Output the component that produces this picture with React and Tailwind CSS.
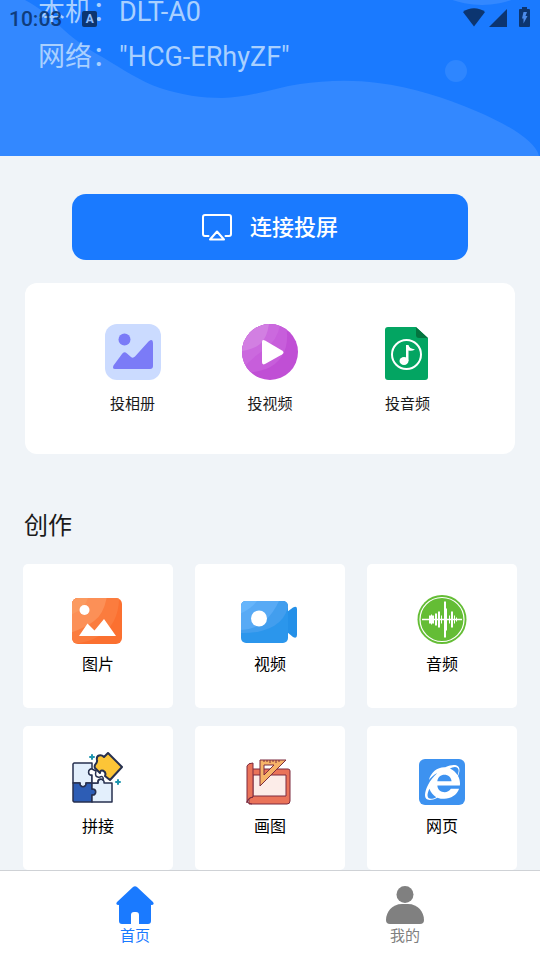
import { useState } from 'react'
import { FaInternetExplorer } from 'react-icons/fa'

function HeroBackground() {
  return (
    <svg className="absolute inset-0 h-full w-full" viewBox="0 0 540 156" preserveAspectRatio="none" aria-hidden="true">
      <rect width="540" height="156" fill="#1a7aff" />
      <path
        d="M0 0H25C40 8 50 17 64 30C76 41 88 49 104 58C122 69 140 81 160 88C182 95 202 98 222 98C248 98 274 88 300 84C322 81 350 79 378 83C412 87 446 98 476 111C505 123 536 141 539 156H0Z"
        fill="#3388ff"
      />
      <circle cx="482" cy="-85" r="90" fill="#3388ff" />
      <circle cx="456" cy="71" r="11" fill="#2e86ff" />
    </svg>
  )
}

function StatusBar() {
  return (
    <div className="absolute inset-x-0 top-0 flex items-start justify-between pt-[7px] pl-[9px] pr-[10px] text-[#0c3570]">
      <div className="flex items-center gap-5">
        <span className="text-[21px] leading-6 font-medium opacity-90">10:03</span>
        <span className="flex h-4 w-[15px] items-center justify-center rounded-xs bg-[#0c3570] text-xs font-bold text-[#8fbfff]">
          A
        </span>
      </div>
      <div className="flex items-center">
        <svg className="h-5 w-[22px]" viewBox="0 0 22 20" fill="currentColor" aria-hidden="true">
          <path d="M11 19.500L0 5C6 0 16 0 22 5Z" />
        </svg>
        <svg className="ml-1 h-5 w-[18px]" viewBox="0 0 18 20" fill="currentColor" aria-hidden="true">
          <path d="M18 2V20H0Z" />
        </svg>
        <svg className="ml-3 h-5 w-[11px]" viewBox="0 0 11 20" aria-hidden="true">
          <path d="M3 0H8V2H10Q11 2 11 3V19Q11 20 10 20H1Q0 20 0 19V3Q0 2 1 2H3Z" fill="currentColor" />
          <path d="M4.500 5H8L6.500 9H8.500L4.500 16.500V11.500H3Z" fill="#4b8bea" />
        </svg>
      </div>
    </div>
  )
}

function CastIcon() {
  return (
    <svg className="h-[27px] w-[30px]" viewBox="0 0 30 27" fill="none" stroke="white" strokeWidth="2" strokeLinejoin="round" strokeLinecap="round" aria-hidden="true">
      <path d="M6.500 22H3Q1 22 1 20V3Q1 1 3 1H27Q29 1 29 3V20Q29 22 27 22H23.500" />
      <path d="M15 17.500L22 25.500H8Z" />
    </svg>
  )
}

function AlbumIcon() {
  return (
    <svg className="size-14" viewBox="0 0 56 56" aria-hidden="true">
      <rect width="56" height="56" rx="12" fill="#cbdbff" />
      <circle cx="19.500" cy="15.500" r="6" fill="#7b7bf7" />
      <path d="M10 45Q7 45 8.500 41.500L17 30Q19 27 22 29.500L26 33Q28 34.500 30 32.500L43.500 17.500Q48 14 48 19V42Q48 45 45 45Z" fill="#7b7bf7" />
    </svg>
  )
}

function PlayIcon() {
  return (
    <svg className="size-14" viewBox="0 0 56 56" aria-hidden="true">
      <defs>
        <clipPath id="play-disc">
          <circle cx="28" cy="28" r="28" />
        </clipPath>
      </defs>
      <g clipPath="url(#play-disc)">
        <rect width="56" height="56" fill="#c04fd5" />
        <path d="M0 0H44Q50 34 24 45Q10 50 0 47Z" fill="#c75edb" />
        <path d="M0 0H38Q36 16 22 26Q12 32 0 45Z" fill="#cb69de" />
        <path d="M0 0H27Q25 14 18 20Q12 25 0 27Z" fill="#d27fe2" />
      </g>
      <path d="M20 18Q20 15 23 16.500L40 26.500Q43 28.500 40 30.500L23 40Q20 41.500 20 38Z" fill="white" />
    </svg>
  )
}

function MusicFileIcon() {
  return (
    <svg className="size-14" viewBox="0 0 56 56" aria-hidden="true">
      <path d="M8 3H36L48 14V53Q48 56 45 56H8Q5 56 5 53V6Q5 3 8 3Z" fill="#03a562" />
      <path d="M36 3H48V14Z" fill="white" />
      <path d="M36 3L48 14H39Q36 14 36 11Z" fill="#04743f" />
      <circle cx="26.500" cy="30.500" r="14.500" fill="none" stroke="white" strokeWidth="2" />
      <ellipse cx="24" cy="37" rx="4.500" ry="4" fill="white" />
      <path d="M26 21H28.500Q29 24.500 35 25.500Q32 27.500 28.500 26.500V37H26Z" fill="white" />
    </svg>
  )
}

function PictureIcon() {
  return (
    <svg className="h-[60px] w-[60px]" viewBox="1 0 60 60" aria-hidden="true">
      <defs>
        <clipPath id="picture-card">
          <rect x="5" y="8" width="50" height="46" rx="6" />
        </clipPath>
      </defs>
      <g clipPath="url(#picture-card)">
        <rect width="60" height="60" fill="#fb7030" />
        <path d="M0 0H52Q54 34 32 46Q20 54 0 54Z" fill="#fb7c3e" />
        <path d="M0 0H41Q38 24 27 31Q18 38 0 44Z" fill="#fc9057" />
        <path d="M0 0H22Q22 20 0 26Z" fill="#fb9a60" />
      </g>
      <circle cx="17.500" cy="20" r="5" fill="white" />
      <path d="M12 46L20.500 33.500L27.500 40.500L37 29L49 46Z" fill="white" />
    </svg>
  )
}

function VideoIcon() {
  return (
    <svg className="h-[60px] w-[60px]" viewBox="1 0 60 60" aria-hidden="true">
      <defs>
        <clipPath id="camera-body">
          <rect x="2" y="11" width="47" height="42" rx="5" />
        </clipPath>
      </defs>
      <path d="M48 22L54 17.500Q58 15.500 58 19V45Q58 49 54 47L48 42Z" fill="#2490e8" />
      <g clipPath="url(#camera-body)">
        <rect width="60" height="60" fill="#2b96ec" />
        <path d="M0 0H50V12Q48 28 35 36Q20 44 0 43Z" fill="#429eee" />
        <path d="M0 0H40V11Q35 22 26 31Q16 40 0 40Z" fill="#58aaf5" />
        <path d="M0 0H22Q20 16 0 24Z" fill="#66b5fb" />
      </g>
      <circle cx="20" cy="28.500" r="8" fill="white" />
    </svg>
  )
}

function WaveIcon() {
  // x position, half height and width of every bar
  const bars = [
    [17, 4, 2], [19, 5, 1], [20, 4, 2], [23, 6, 2], [26, 8, 2], [29, 4, 1],
    [32, 18, 2], [34, 11, 1], [37, 4, 1], [39, 8, 2], [42, 4, 1], [44, 2, 1],
  ]
  return (
    <svg className="h-[60px] w-[60px]" viewBox="0 0 60 60" aria-hidden="true">
      <circle cx="30" cy="29.500" r="24.500" fill="#64bd35" />
      <circle cx="30" cy="29.500" r="22" fill="none" stroke="white" strokeWidth="1.200" />
      <path d="M10 29.500H50" stroke="white" strokeWidth="1.500" />
      {bars.map(([x, h, w]) => (
        <rect key={x} x={x} y={29.5 - h} width={w} height={h * 2} fill="white" />
      ))}
    </svg>
  )
}

function PuzzleIcon() {
  return (
    <svg className="h-[60px] w-[60px]" viewBox="1 1 60 60" strokeLinejoin="round" aria-hidden="true">
      <g stroke="#27304f" strokeWidth="1.500">
        <path d="M7 12H25V18C21 17 20 25 25 24V32H19C20 37 12 37 13 32H6V13Z" fill="#e3effc" />
        <path d="M6 32H13C12 37 20 37 19 32H25V38C30 37 30 45 25 44V51H7L6 50Z" fill="#2d5db5" />
        <path d="M25 32H31C30 27 38 27 37 32H45V51H25V44C30 45 30 37 25 38Z" fill="#e3effc" />
        <path d="M25 18C21 17 20 25 25 24V32H31C30 28 34 27 36 29C37 26 35 25 33 26Q27 27 29 20Z" fill="white" />
        <path d="M41 2L55 16L43 29L38 25C40 20 33 17 33 22L28 17C26 13 31 13 30 9C29 4 34 3 37 6Z" fill="#fcc537" strokeWidth="2" />
      </g>
      <path d="M25 4V8M23 6H27M51 29V33M49 31H53" stroke="#1e95ae" strokeWidth="2" strokeLinecap="round" />
    </svg>
  )
}

function DrawingIcon() {
  return (
    <svg className="h-[60px] w-[60px]" viewBox="1 1 60 60" strokeLinejoin="round" aria-hidden="true">
      <g stroke="#7c2b3f" strokeWidth="1">
        <path d="M9 18H49Q51 18 51 20V50Q51 53 48 53H10Z" fill="#ea7359" />
        <path d="M14 24H47V45H14Z" fill="#fcece8" />
        <path d="M8 52V15Q9 12 14 12V46Q8 47 8 52Z" fill="#ea7359" />
        <path d="M8 51Q10 46 14 46M8 50Q9 53 13 53" fill="none" />
        <path d="M21 9H47L21 35ZM25 14V24L35 14Z" fill="#f6b368" fillRule="evenodd" />
      </g>
      <path d="M25 9V11M28 9V11M31 9V12M34 9V11M37 9V12M40 9V11" stroke="#7c2b3f" strokeWidth="1" />
    </svg>
  )
}

function WebIcon() {
  return (
    <span className="flex h-[60px] w-[60px] items-center justify-center">
      <span className="flex h-[46px] w-[46px] items-center justify-center rounded-md bg-[#3d92f0] text-white">
        <FaInternetExplorer size={35} aria-hidden="true" />
      </span>
    </span>
  )
}

function HomeIcon() {
  return (
    <svg className="h-[38px] w-[38px]" viewBox="0 0 38 38" fill="currentColor" aria-hidden="true">
      <path d="M17 1Q19-0.500 21 1L37 16Q39 19 35 19V35Q35 38 32 38H23V29Q23 26 20 26H18Q15 26 15 29V38H6Q3 38 3 35V19Q-1 19 1 16Z" />
    </svg>
  )
}

function UserIcon() {
  return (
    <svg className="h-[38px] w-[38px]" viewBox="0 0 38 38" fill="currentColor" aria-hidden="true">
      <circle cx="19" cy="8.500" r="8.500" />
      <path d="M16 18H22C32 18 38 26 38 34Q38 38 34 38H4Q0 38 0 34C0 26 6 18 16 18Z" />
    </svg>
  )
}

const castItems = [
  { label: '投相册', Icon: AlbumIcon },
  { label: '投视频', Icon: PlayIcon },
  { label: '投音频', Icon: MusicFileIcon },
]

const createItems = [
  { label: '图片', Icon: PictureIcon },
  { label: '视频', Icon: VideoIcon },
  { label: '音频', Icon: WaveIcon },
  { label: '拼接', Icon: PuzzleIcon },
  { label: '画图', Icon: DrawingIcon },
  { label: '网页', Icon: WebIcon },
]

const tabs = [
  { id: 'home', label: '首页', Icon: HomeIcon },
  { id: 'mine', label: '我的', Icon: UserIcon },
]

export default function App() {
  const [tab, setTab] = useState('home')

  return (
    <div className="flex h-screen flex-col bg-[#f0f4f8] font-[Roboto,'Noto_Sans_CJK_SC',sans-serif] text-[#1a1a1a]">
      <main className="min-h-0 flex-1 overflow-hidden">
        {/* Header */}
        <header className="relative h-[156px] overflow-hidden">
          <HeroBackground />
          <div className="relative -mt-[10px] pl-[38px] text-[27px] leading-[45px] text-[#a9d0ff]">
            <p>本机：DLT-A0</p>
            <p>网络："HCG-ERhyZF"</p>
          </div>
          <StatusBar />
        </header>

        {/* Connect */}
        <div className="px-[72px] pt-[38px]">
          <button className="flex h-[66px] w-full items-center justify-center gap-[18px] rounded-[14px] bg-[#1a7aff] text-[22px] font-medium text-white">
            <CastIcon />
            连接投屏
          </button>
        </div>

        {/* Cast shortcuts */}
        <section className="mx-[25px] mt-[23px] flex justify-evenly rounded-xl bg-white pt-[41px] pb-[38px]">
          {castItems.map(({ label, Icon }) => (
            <button key={label} className="flex w-[60px] flex-col items-center gap-3 text-[15px] leading-6">
              <Icon />
              {label}
            </button>
          ))}
        </section>

        {/* Create */}
        <h2 className="mt-[54px] px-6 text-2xl leading-9">创作</h2>
        <section className="mt-5 grid grid-cols-3 gap-x-[22px] gap-y-[18px] px-[23px]">
          {createItems.map(({ label, Icon }) => (
            <button key={label} className="flex h-36 flex-col items-center rounded-[5px] bg-white pt-[26px] text-base leading-6 text-black">
              <Icon />
              <span className="mt-[3px]">{label}</span>
            </button>
          ))}
        </section>
      </main>

      {/* Tab bar */}
      <nav className="flex h-[90px] shrink-0 border-t border-[#cfd2d6] bg-white">
        {tabs.map(({ id, label, Icon }) => (
          <button
            key={id}
            onClick={() => setTab(id)}
            className={`flex flex-1 flex-col items-center pt-[15px] text-[15px] leading-6 ${
              tab === id ? 'text-[#1a7aff]' : 'text-[#808080]'
            }`}
          >
            <Icon />
            {label}
          </button>
        ))}
      </nav>
    </div>
  )
}
